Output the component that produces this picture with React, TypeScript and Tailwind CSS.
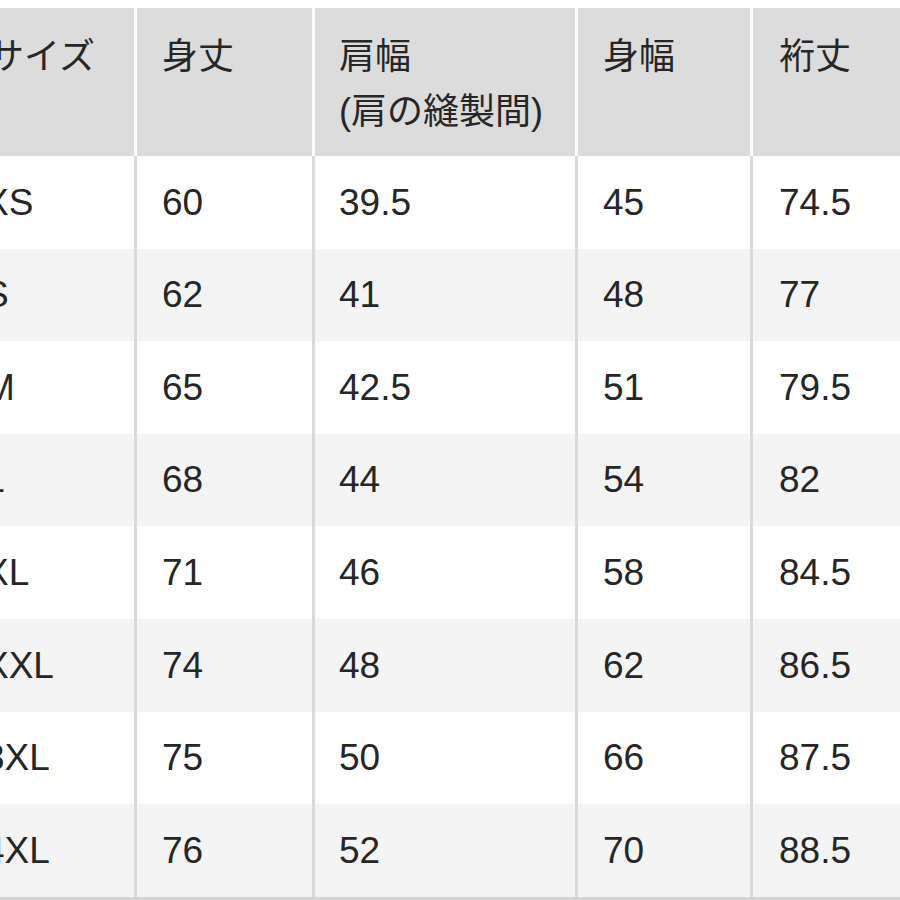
import React from "react";

const rows: [string, string, string, string, string][] = [
  ["XS", "60", "39.5", "45", "74.5"],
  ["S", "62", "41", "48", "77"],
  ["M", "65", "42.5", "51", "79.5"],
  ["L", "68", "44", "54", "82"],
  ["XL", "71", "46", "58", "84.5"],
  ["XXL", "74", "48", "62", "86.5"],
  ["3XL", "75", "50", "66", "87.5"],
  ["4XL", "76", "52", "70", "88.5"],
];

const widths = ["w-[177px]", "w-[178px]", "w-[263px]", "w-[175px]", "w-[200px]"];

export default function App() {
  return (
    <div
      className="w-[900px] h-[900px] overflow-hidden bg-white pt-[8px] text-[#262626]"
      style={{ fontFamily: '"Liberation Sans", "Noto Sans CJK JP", sans-serif' }}
    >
      <div className="ml-[-40px] w-[1000px]">
        {/* Header */}
        <div className="flex h-[148px] bg-[#dcdcdc] text-[36px] leading-[55px]">
          <div className={`${widths[0]} shrink-0 border-r-[3px] border-white pl-[28px] pt-[21px]`}>サイズ</div>
          <div className={`${widths[1]} shrink-0 border-r-[3px] border-white pl-[25px] pt-[21px]`}>身丈</div>
          <div className={`${widths[2]} shrink-0 border-r-[3px] border-white pl-[24px] pt-[21px]`}>
            <div>肩幅</div>
            <div>(肩の縫製間)</div>
          </div>
          <div className={`${widths[3]} shrink-0 border-r-[3px] border-white pl-[25px] pt-[21px]`}>身幅</div>
          <div className={`${widths[4]} shrink-0 pl-[26px] pt-[21px]`}>裄丈</div>
        </div>
        {/* Body */}
        <div className="border-b-[3px] border-[#d4d4d4]">
          {rows.map((r, i) => (
            <div
              key={r[0]}
              className={`flex h-[92.6px] text-[37px] ${i % 2 === 1 ? "bg-[#f4f4f4]" : "bg-white"}`}
            >
              <div className={`${widths[0]} shrink-0 border-r-[3px] border-[#dadada] pl-[24px] flex items-center`}>{r[0]}</div>
              <div className={`${widths[1]} shrink-0 border-r-[3px] border-[#dadada] pl-[25px] flex items-center`}>{r[1]}</div>
              <div className={`${widths[2]} shrink-0 border-r-[3px] border-[#dadada] pl-[24px] flex items-center`}>{r[2]}</div>
              <div className={`${widths[3]} shrink-0 border-r-[3px] border-[#dadada] pl-[25px] flex items-center`}>{r[3]}</div>
              <div className={`${widths[4]} shrink-0 pl-[26px] flex items-center`}>{r[4]}</div>
            </div>
          ))}
        </div>
      </div>
    </div>
  );
}
